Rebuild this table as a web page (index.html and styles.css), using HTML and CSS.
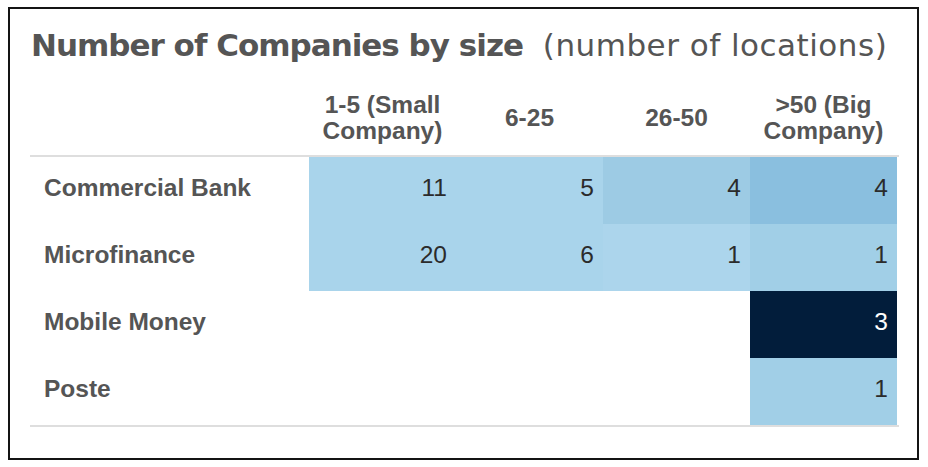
FILE: index.html
```html
<!DOCTYPE html>
<html lang="en">
<head>
<meta charset="utf-8">
<title>Number of Companies by size</title>
<link rel="stylesheet" href="styles.css">
</head>
<body>
<div class="card">
  <h1 class="title"><b>Number of Companies by size</b> <span class="sub">(number of locations)</span></h1>
  <div class="grid thead">
    <div class="hcell"></div>
    <div class="hcell">1-5 (Small<br>Company)</div>
    <div class="hcell">6-25</div>
    <div class="hcell">26-50</div>
    <div class="hcell">&gt;50 (Big<br>Company)</div>
  </div>
  <div class="grid tbody">
    <div class="label">Commercial Bank</div>
    <div class="num c-a">11</div>
    <div class="num c-a">5</div>
    <div class="num c-b">4</div>
    <div class="num c-c">4</div>

    <div class="label">Microfinance</div>
    <div class="num c-a">20</div>
    <div class="num c-a">6</div>
    <div class="num c-d">1</div>
    <div class="num c-e">1</div>

    <div class="label">Mobile Money</div>
    <div class="num"></div>
    <div class="num"></div>
    <div class="num"></div>
    <div class="num c-dark">3</div>

    <div class="label">Poste</div>
    <div class="num"></div>
    <div class="num"></div>
    <div class="num"></div>
    <div class="num c-e">1</div>
  </div>
</div>
</body>
</html>
```
FILE: styles.css
```css
html, body {
  background: #ffffff;
}
body {
  margin: 7px 8px;
}
.card {
  box-sizing: border-box;
  width: 911px;
  height: 453px;
  border: 2px solid #141414;
  padding: 0 0 0 20px;
  background: #fff;
}
.title {
  margin: 16px 0 15px 1px;
  font-family: "DejaVu Sans", Verdana, sans-serif;
  font-size: 31px;
  line-height: 40px;
  font-weight: normal;
  color: #555555;
  white-space: nowrap;
}
.title b {
  font-weight: bold;
  letter-spacing: -1px;
}
.title .sub {
  margin-left: 10px;
  letter-spacing: 0.5px;
}
.grid {
  display: grid;
  grid-template-columns: 279px repeat(4, 147px);
  width: 867px;
  padding-right: 2px;
  font-family: "Liberation Sans", Arial, sans-serif;
  font-size: 24.5px;
}
.thead {
  height: 75px;
  align-items: center;
}
.hcell {
  text-align: center;
  font-weight: bold;
  color: #555555;
  line-height: 26px;
}
.tbody {
  border-top: 2px solid #dedede;
  border-bottom: 2px solid #dedede;
  grid-auto-rows: 67px;
}
.label {
  display: flex;
  align-items: center;
  padding: 0 0 6px 14px;
  font-weight: bold;
  color: #555555;
}
.num {
  display: flex;
  align-items: center;
  justify-content: flex-end;
  padding: 0 9px 6px 0;
  color: #2b2b2b;
}
.c-a { background: #a9d4eb; }
.c-b { background: #9dcbe4; }
.c-c { background: #8abfdf; }
.c-d { background: #acd5ec; }
.c-e { background: #a1cfe7; }
.c-dark { background: #021d3b; color: #ffffff; }
```
